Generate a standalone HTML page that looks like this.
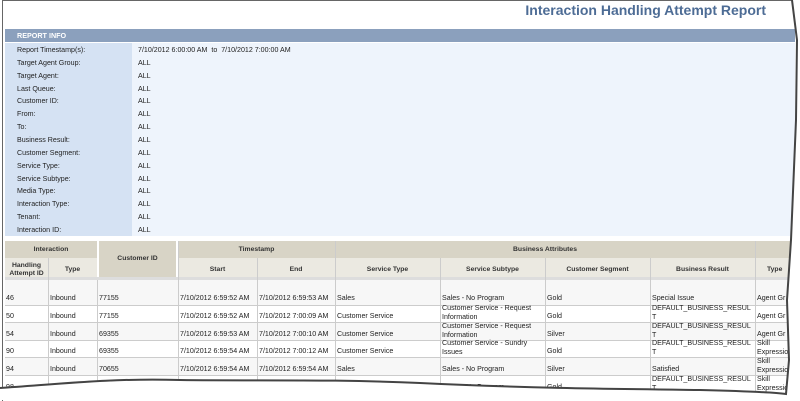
<!DOCTYPE html>
<html><head><style>
body{margin:0;width:800px;height:400px;overflow:hidden;background:#fff;font-family:"Liberation Sans",sans-serif;position:relative}
.a{position:absolute}
.t{font-size:7.1px;color:#222;white-space:nowrap}
.h{font-size:6.8px;font-weight:bold;color:#333;text-align:center;position:absolute}
</style></head><body>
<div class="a" style="left:2px;top:0;width:792px;height:400px;border-left:1px solid #666;border-top:1px solid #666"></div>
<div class="a" style="left:290px;top:2px;width:476px;text-align:right;font-size:14px;font-weight:bold;color:#4d6c95">Interaction Handling Attempt Report</div>
<div class="a" style="left:5px;top:29px;width:790px;height:13px;background:#8ba0bd"></div>
<div class="a t" style="left:17px;top:31px;color:#fff;font-weight:bold;font-size:7.2px">REPORT INFO</div>
<div class="a" style="left:5px;top:43px;width:127px;height:193px;background:#d5e2f3"></div>
<div class="a" style="left:132px;top:43px;width:663px;height:193px;background:#eef4fc"></div>
<div class="a" style="left:17px;top:44px;line-height:12.86px;font-size:7.1px;color:#222">Report Timestamp(s):<br>Target Agent Group:<br>Target Agent:<br>Last Queue:<br>Customer ID:<br>From:<br>To:<br>Business Result:<br>Customer Segment:<br>Service Type:<br>Service Subtype:<br>Media Type:<br>Interaction Type:<br>Tenant:<br>Interaction ID:</div>
<div class="a" style="left:138px;top:44px;line-height:12.86px;font-size:7.1px;color:#222">7/10/2012 6:00:00 AM &nbsp;to &nbsp;7/10/2012 7:00:00 AM<br>ALL<br>ALL<br>ALL<br>ALL<br>ALL<br>ALL<br>ALL<br>ALL<br>ALL<br>ALL<br>ALL<br>ALL<br>ALL<br>ALL</div>

<div class="a" style="left:5px;top:241px;width:790px;height:17px;background:#d8d4c6"></div>
<div class="a" style="left:5px;top:258px;width:790px;height:19px;background:#ebe9e1"></div>
<div class="a" style="left:97px;top:241px;width:81px;height:36px;background:#d8d4c6;border-left:2px solid #fff;border-right:2px solid #fff;box-sizing:border-box"></div>
<div class="a" style="left:5px;top:277px;width:790px;height:3px;background:#ddd"></div>
<div class="h" style="left:5px;top:246px;width:92px">Interaction</div>
<div class="h" style="left:97px;top:255px;width:81px">Customer ID</div>
<div class="h" style="left:178px;top:246px;width:157px">Timestamp</div>
<div class="h" style="left:335px;top:246px;width:420px">Business Attributes</div>
<div class="h" style="left:5px;top:262px;width:43px;line-height:8px">Handling Attempt ID</div>
<div class="h" style="left:48px;top:266px;width:49px">Type</div>
<div class="h" style="left:178px;top:266px;width:79px">Start</div>
<div class="h" style="left:257px;top:266px;width:78px">End</div>
<div class="h" style="left:335px;top:266px;width:105px">Service Type</div>
<div class="h" style="left:440px;top:266px;width:105px">Service Subtype</div>
<div class="h" style="left:545px;top:266px;width:105px">Customer Segment</div>
<div class="h" style="left:650px;top:266px;width:105px">Business Result</div>
<div class="h" style="left:755px;top:266px;width:45px;text-align:left;padding-left:12px">Type</div>
<div class="a" style="left:5px;top:280px;width:790px;height:25px;background:#f7f7f7"></div>
<div class="a" style="left:5px;top:322px;width:790px;height:18px;background:#f7f7f7"></div>
<div class="a" style="left:5px;top:357px;width:790px;height:18px;background:#f7f7f7"></div>
<svg class="a" style="left:0;top:0" width="800" height="400">
<g stroke="#ccc" stroke-width="1">
<line x1="5" y1="305.5" x2="795" y2="305.5"/><line x1="5" y1="322.5" x2="795" y2="322.5"/><line x1="5" y1="340.5" x2="795" y2="340.5"/><line x1="5" y1="357.5" x2="795" y2="357.5"/><line x1="5" y1="375.5" x2="795" y2="375.5"/>
<line x1="48.5" y1="258" x2="48.5" y2="400"/><line x1="97.5" y1="280" x2="97.5" y2="400"/><line x1="178.5" y1="241" x2="178.5" y2="400"/><line x1="257.5" y1="258" x2="257.5" y2="400"/><line x1="335.5" y1="241" x2="335.5" y2="400"/><line x1="440.5" y1="258" x2="440.5" y2="400"/><line x1="545.5" y1="258" x2="545.5" y2="400"/><line x1="650.5" y1="258" x2="650.5" y2="400"/><line x1="755.5" y1="241" x2="755.5" y2="400"/>
</g></svg>
<div class="a t" style="left:6px;top:294px">46</div><div class="a t" style="left:50px;top:294px">Inbound</div><div class="a t" style="left:99px;top:294px">77155</div><div class="a t" style="left:180px;top:294px">7/10/2012 6:59:52 AM</div><div class="a t" style="left:259px;top:294px">7/10/2012 6:59:53 AM</div><div class="a t" style="left:337px;top:294px">Sales</div><div class="a t" style="left:442px;top:294px">Sales - No Program</div><div class="a t" style="left:547px;top:294px">Gold</div><div class="a t" style="left:652px;top:294px">Special Issue</div><div class="a t" style="left:757px;top:294px">Agent Gr</div>
<div class="a t" style="left:6px;top:312px">50</div><div class="a t" style="left:50px;top:312px">Inbound</div><div class="a t" style="left:99px;top:312px">77155</div><div class="a t" style="left:180px;top:312px">7/10/2012 6:59:52 AM</div><div class="a t" style="left:259px;top:312px">7/10/2012 7:00:09 AM</div><div class="a t" style="left:337px;top:312px">Customer Service</div><div class="a t" style="left:442px;top:304px;line-height:9px">Customer Service - Request<br>Information</div><div class="a t" style="left:547px;top:312px">Gold</div><div class="a t" style="left:652px;top:304px;line-height:9px">DEFAULT_BUSINESS_RESUL<br>T</div><div class="a t" style="left:757px;top:312px">Agent Gr</div>
<div class="a t" style="left:6px;top:330px">54</div><div class="a t" style="left:50px;top:330px">Inbound</div><div class="a t" style="left:99px;top:330px">69355</div><div class="a t" style="left:180px;top:330px">7/10/2012 6:59:53 AM</div><div class="a t" style="left:259px;top:330px">7/10/2012 7:00:10 AM</div><div class="a t" style="left:337px;top:330px">Customer Service</div><div class="a t" style="left:442px;top:322px;line-height:9px">Customer Service - Request<br>Information</div><div class="a t" style="left:547px;top:330px">Silver</div><div class="a t" style="left:652px;top:322px;line-height:9px">DEFAULT_BUSINESS_RESUL<br>T</div><div class="a t" style="left:757px;top:330px">Agent Gr</div>
<div class="a t" style="left:6px;top:347px">90</div><div class="a t" style="left:50px;top:347px">Inbound</div><div class="a t" style="left:99px;top:347px">69355</div><div class="a t" style="left:180px;top:347px">7/10/2012 6:59:54 AM</div><div class="a t" style="left:259px;top:347px">7/10/2012 7:00:12 AM</div><div class="a t" style="left:337px;top:347px">Customer Service</div><div class="a t" style="left:442px;top:339px;line-height:9px">Customer Service - Sundry<br>Issues</div><div class="a t" style="left:547px;top:347px">Gold</div><div class="a t" style="left:652px;top:339px;line-height:9px">DEFAULT_BUSINESS_RESUL<br>T</div><div class="a t" style="left:757px;top:339px;line-height:9px">Skill<br>Expressio</div>
<div class="a t" style="left:6px;top:365px">94</div><div class="a t" style="left:50px;top:365px">Inbound</div><div class="a t" style="left:99px;top:365px">70655</div><div class="a t" style="left:180px;top:365px">7/10/2012 6:59:54 AM</div><div class="a t" style="left:259px;top:365px">7/10/2012 6:59:54 AM</div><div class="a t" style="left:337px;top:365px">Sales</div><div class="a t" style="left:442px;top:365px">Sales - No Program</div><div class="a t" style="left:547px;top:365px">Silver</div><div class="a t" style="left:652px;top:365px">Satisfied</div><div class="a t" style="left:757px;top:357px;line-height:9px">Skill<br>Expression</div>
<div class="a t" style="left:6px;top:383px">98</div><div class="a t" style="left:50px;top:383px">Inbound</div><div class="a t" style="left:337px;top:383px">Sales</div><div class="a t" style="left:442px;top:383px">Sales - No Program</div><div class="a t" style="left:547px;top:383px">Gold</div><div class="a t" style="left:652px;top:375px;line-height:9px">DEFAULT_BUSINESS_RESUL<br>T</div><div class="a t" style="left:757px;top:375px;line-height:9px">Skill<br>Expression</div>
<svg class="a" style="left:0;top:0" width="800" height="400">
<path d="M0,388 C60,384 110,378 180,380 C260,381 330,379 420,383 C520,388 620,389 700,390 C740,391 770,392 786,394 L789,360 L787,300 L791,240 L796,120 L797,40 L792,0 L800,0 L800,400 L0,400 Z" fill="#fff"/>
<path d="M0,388 C60,384 110,378 180,380 C260,381 330,379 420,383 C520,388 620,389 700,390 C740,391 770,392 786,394 L789,360 L787,300 L791,240 L796,120 L797,40 L792,0" fill="none" stroke="#444" stroke-width="2"/>
</svg>
</body></html>
